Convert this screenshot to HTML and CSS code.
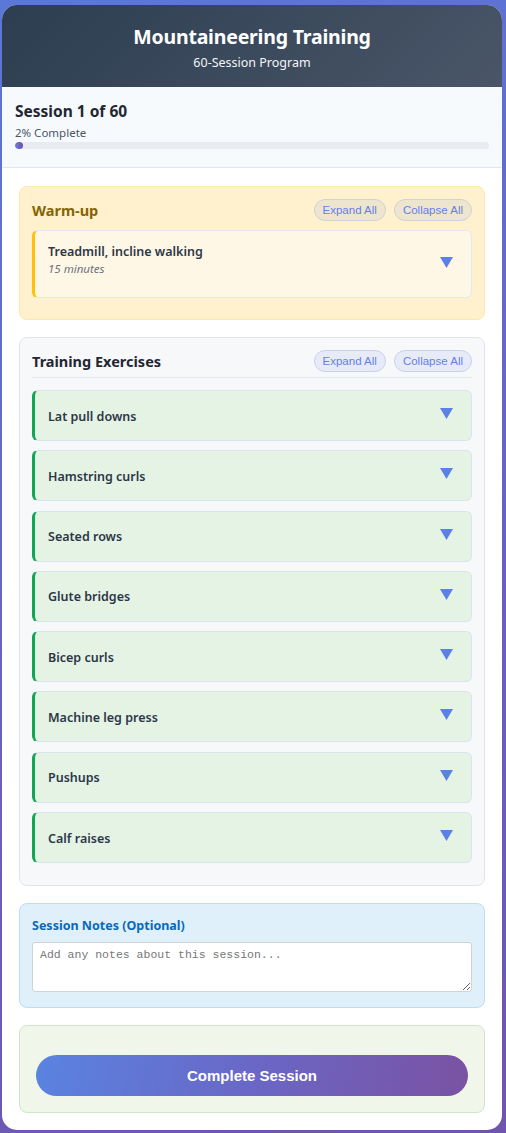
FILE: index.html
```html
<!DOCTYPE html>
<html lang="en">
<head>
<meta charset="utf-8">
<title>Mountaineering Training</title>
<link rel="stylesheet" href="styles.css">
</head>
<body>
<div class="app">
  <header class="hero">
    <h1 class="hero-title">Mountaineering Training</h1>
    <p class="hero-sub">60-Session Program</p>
  </header>
  <section class="progress">
    <h2 class="progress-title">Session 1 of 60</h2>
    <div class="progress-label">2% Complete</div>
    <div class="progress-track"><div class="progress-fill" style="width:1.7%"></div></div>
  </section>
  <main class="content">
    <section class="block block-warm">
      <div class="block-head">
        <h3 class="block-title warm-title">Warm-up</h3>
        <div class="block-actions">
          <button class="pill">Expand All</button>
          <button class="pill">Collapse All</button>
        </div>
      </div>
      <div class="item item-warm">
        <div class="item-text">
          <div class="item-name">Treadmill, incline walking</div>
          <div class="item-meta">15 minutes</div>
        </div>
        <svg class="caret" width="13" height="11" viewBox="0 0 13 11"><path d="M0 0H13L6.5 11Z" fill="#5b80e6"/></svg>
      </div>
    </section>

    <section class="block block-train">
      <div class="block-head block-head-line">
        <h3 class="block-title">Training Exercises</h3>
        <div class="block-actions">
          <button class="pill pill-blue">Expand All</button>
          <button class="pill pill-blue">Collapse All</button>
        </div>
      </div>
      <div class="item item-ex"><div class="item-name">Lat pull downs</div><svg class="caret" width="13" height="11" viewBox="0 0 13 11"><path d="M0 0H13L6.5 11Z" fill="#5b80e6"/></svg></div>
      <div class="item item-ex"><div class="item-name">Hamstring curls</div><svg class="caret" width="13" height="11" viewBox="0 0 13 11"><path d="M0 0H13L6.5 11Z" fill="#5b80e6"/></svg></div>
      <div class="item item-ex"><div class="item-name">Seated rows</div><svg class="caret" width="13" height="11" viewBox="0 0 13 11"><path d="M0 0H13L6.5 11Z" fill="#5b80e6"/></svg></div>
      <div class="item item-ex"><div class="item-name">Glute bridges</div><svg class="caret" width="13" height="11" viewBox="0 0 13 11"><path d="M0 0H13L6.5 11Z" fill="#5b80e6"/></svg></div>
      <div class="item item-ex"><div class="item-name">Bicep curls</div><svg class="caret" width="13" height="11" viewBox="0 0 13 11"><path d="M0 0H13L6.5 11Z" fill="#5b80e6"/></svg></div>
      <div class="item item-ex"><div class="item-name">Machine leg press</div><svg class="caret" width="13" height="11" viewBox="0 0 13 11"><path d="M0 0H13L6.5 11Z" fill="#5b80e6"/></svg></div>
      <div class="item item-ex"><div class="item-name">Pushups</div><svg class="caret" width="13" height="11" viewBox="0 0 13 11"><path d="M0 0H13L6.5 11Z" fill="#5b80e6"/></svg></div>
      <div class="item item-ex"><div class="item-name">Calf raises</div><svg class="caret" width="13" height="11" viewBox="0 0 13 11"><path d="M0 0H13L6.5 11Z" fill="#5b80e6"/></svg></div>
    </section>

    <section class="block block-notes">
      <label class="notes-title" for="notes">Session Notes (Optional)</label>
      <textarea id="notes" class="notes-input" placeholder="Add any notes about this session..."></textarea>
    </section>

    <section class="block block-done">
      <button class="done-btn">Complete Session</button>
    </section>
  </main>
</div>
</body>
</html>
```

FILE: styles.css
```css
* { box-sizing: border-box; }
html, body { margin: 0; }
body {
  min-height: 1133px;
  padding: 5px 4px 3px 2px;
  background: linear-gradient(160deg, #5a78d8 0%, #6a5fc0 60%, #6f55ad 100%);
  font-family: "Noto Sans", "Open Sans", sans-serif;
  color: #2d3748;
}
.app {
  background: #ffffff;
  border-radius: 15px;
  overflow: hidden;
  height: 1125px;
}
.hero {
  background: linear-gradient(135deg, #2c3e50 0%, #4a5568 100%);
  color: #fff;
  text-align: center;
  height: 82px;
  padding-top: 19px;
}
.hero-title {
  margin: 0;
  font-size: 19.5px;
  font-weight: 700;
  line-height: 26px;
  letter-spacing: -0.2px;
}
.hero-sub {
  margin: 5px 0 0;
  font-size: 12.5px;
  line-height: 16px;
  opacity: 0.95;
}
.progress {
  background: #f7fafc;
  border-bottom: 1px solid #e2e8f0;
  height: 81px;
  padding: 14px 13px 0;
}
.progress-title {
  margin: 0;
  font-size: 15.5px;
  font-weight: 700;
  line-height: 20px;
  color: #1f2733;
}
.progress-label {
  margin-top: 5px;
  font-size: 11.5px;
  line-height: 14px;
  color: #4a5568;
}
.progress-track {
  margin-top: 2px;
  height: 7px;
  background: #e8ebef;
  border-radius: 4px;
  overflow: hidden;
}
.progress-fill {
  height: 100%;
  background: linear-gradient(90deg, #667eea, #764ba2);
  border-radius: 4px;
}
.content {
  padding: 18px 17px 17px;
  display: flex;
  flex-direction: column;
  gap: 17px;
}
.block {
  border-radius: 8px;
  border: 1px solid #e2e8f0;
  padding: 13px 12px 12px;
}
.block-warm {
  background: #fff1cd;
  border-color: #fde8a9;
  padding-top: 12px;
  padding-bottom: 21px;
}
.block-train {
  background: #f7f8fa;
  border-color: #e0e4ea;
  padding-top: 12px;
  padding-bottom: 12px;
}
.block-head {
  display: flex;
  align-items: center;
  justify-content: space-between;
  margin-bottom: 9px;
}
.block-head-line {
  border-bottom: 1px solid #e2e8f0;
  padding-bottom: 5px;
  margin-bottom: 12px;
}
.block-title {
  margin: 0;
  font-size: 14.5px;
  font-weight: 700;
  line-height: 20px;
  color: #1f2733;
}
.warm-title { color: #856404; }
.block-actions { display: flex; gap: 8px; }
.pill {
  font-family: "Liberation Sans", Arial, sans-serif;
  font-size: 11.5px;
  color: #667eea;
  background: rgba(102, 126, 234, 0.1);
  border: 1px solid #c7d2ee;
  border-radius: 12px;
  height: 22px;
  padding: 0 8px;
  cursor: pointer;
}
.block-warm .pill {
  background: #eee5cf;
  border-color: #cfd2d6;
}
.item {
  display: flex;
  align-items: center;
  justify-content: space-between;
  border: 1px solid #e2e8f0;
  border-radius: 6px;
  padding: 0 18px 0 13px;
  margin-bottom: 9px;
}
.item:last-child { margin-bottom: 0; }
.item-warm {
  background: #fff7e6;
  border-left: 3px solid #ffc107;
  height: 68px;
  align-items: flex-start;
  padding-top: 12px;
}
.item-ex {
  background: #e5f3e5;
  border-color: #dbe4ec;
  border-left: 3px solid #0fa656;
  height: 51px;
  margin-bottom: 9.3px;
}
.block-train .item-ex:last-child { margin-bottom: 10px; }
.item-name {
  font-size: 12.5px;
  font-weight: 600;
  line-height: 18px;
  color: #2d3748;
}
.item-ex .item-name { padding-top: 2px; }
.item-meta {
  font-size: 11.5px;
  font-style: italic;
  line-height: 15px;
  color: #6b7280;
}
.caret { flex: none; margin-top: -4px; }
.item-warm .caret { margin-top: 14px; }
.block-notes {
  background: #e0f0fa;
  border-color: #b8dff5;
  padding: 13px 12px 15px;
  display: flex;
  flex-direction: column;
}
.notes-title {
  font-size: 12.5px;
  font-weight: 700;
  line-height: 18px;
  color: #0a69b8;
  margin-bottom: 7px;
}
.notes-input {
  display: block;
  width: 100%;
  height: 50px;
  border: 1px solid #cfd3d8;
  border-radius: 3px;
  background: #fff;
  padding: 5px 7px;
  font-family: "Liberation Mono", "DejaVu Sans Mono", monospace;
  font-size: 11.5px;
  resize: vertical;
}
.notes-input::placeholder { color: #777; }
.block-done {
  background: #f0f7ea;
  border-color: #cde6cc;
  padding: 29px 16px 16px;
}
.done-btn {
  display: block;
  width: 100%;
  height: 41px;
  border: none;
  border-radius: 21px;
  background: linear-gradient(100deg, #5a83e0 0%, #6a67c6 50%, #7a52a2 100%);
  color: #fff;
  font-family: "Liberation Sans", Arial, sans-serif;
  font-size: 15px;
  font-weight: 700;
  cursor: pointer;
}
```
